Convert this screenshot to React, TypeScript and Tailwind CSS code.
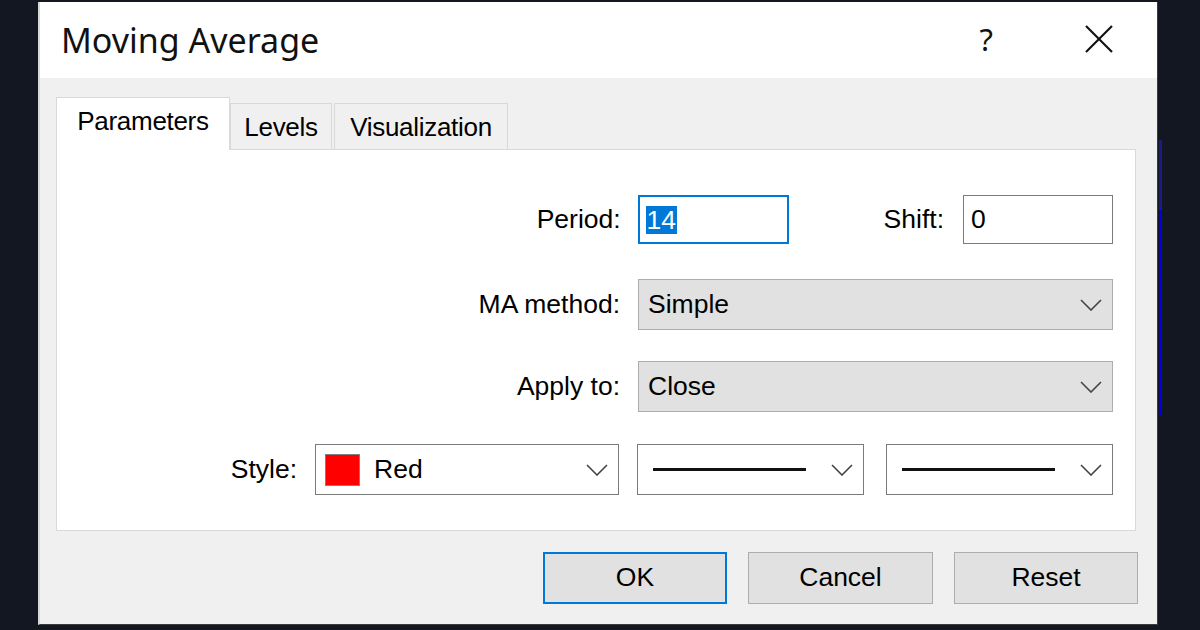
import React from "react";

function Chevron() {
  return (
    <svg width="22" height="12" viewBox="0 0 22 12" className="shrink-0">
      <polyline points="1,1 11,11 21,1" fill="none" stroke="#444" strokeWidth="1.6" />
    </svg>
  );
}

function Select({ width, gray, children }: { width: string; gray?: boolean; children: React.ReactNode }) {
  return (
    <div
      className={`${width} h-full flex items-center justify-between pl-[9px] pr-[10px] border ${
        gray ? "bg-[#e1e1e1] border-[#adadad]" : "bg-white border-[#7a7a7a]"
      }`}
    >
      <div className="flex items-center min-w-0">{children}</div>
      <Chevron />
    </div>
  );
}

export default function App() {
  const tabs = ["Parameters", "Levels", "Visualization"];

  return (
    <div className="w-[1200px] h-[630px] bg-[#131722] pt-[2px] pl-[38px] overflow-hidden font-['Liberation_Sans',Arial,sans-serif] text-black relative">
      {/* chart line peeking out behind the dialog */}
      <div className="absolute left-[1159px] top-[140px] w-[3px] h-[70px] bg-[#1a1a8a]" />
      <div className="absolute left-[1159px] top-[210px] w-[3px] h-[205px] bg-[#0000e0]" />

      <div className="w-[1120px] h-[623px] flex flex-col border-l-2 border-l-[#d8d8d8] border-r border-r-[#3a3a3a] border-b border-b-[#3a3a3a] bg-[#f0f0f0]">
        {/* title bar */}
        <div className="h-[76px] bg-white flex items-center pl-[21px] pr-[44px] shrink-0">
          <div className="font-['Noto_Sans',sans-serif] text-[34px] leading-none text-[#111] flex-1 -mt-[1px]">Moving Average</div>
          <div className="font-['Noto_Sans',sans-serif] text-[31px] leading-none text-[#111] mr-[92px] -mt-[2px]">?</div>
          <svg width="28" height="28" viewBox="0 0 28 28" className="-mt-[2px]">
            <line x1="1" y1="1" x2="27" y2="27" stroke="#111" strokeWidth="2.2" />
            <line x1="27" y1="1" x2="1" y2="27" stroke="#111" strokeWidth="2.2" />
          </svg>
        </div>

        {/* body */}
        <div className="flex-1 flex flex-col pl-[16px] pr-[21px] pt-[19px]">
          {/* tabs */}
          <div className="flex items-end h-[52px] relative z-10">
            {tabs.map((t, i) =>
              i === 0 ? (
                <div
                  key={t}
                  className="h-[53px] w-[174px] -mb-[1px] bg-white border border-b-0 border-[#d9d9d9] flex items-center justify-center pb-[6px] text-[26px] tracking-[-0.3px]"
                >
                  {t}
                </div>
              ) : (
                <div
                  key={t}
                  className={`h-[46px] ${i === 1 ? "w-[102px]" : "w-[174px] ml-[2px]"} bg-[#f0f0f0] border border-b-0 border-[#d9d9d9] flex items-center justify-center pt-[2px] text-[26px] tracking-[-0.3px]`}
                >
                  {t}
                </div>
              )
            )}
          </div>

          {/* tab panel */}
          <div className="w-[1080px] h-[382px] bg-white border border-[#d9d9d9] pt-[45px] pr-[22px] flex flex-col text-[26.5px]">
            <div className="h-[49px] flex items-center justify-end">
              <span className="mr-[17px]">Period:</span>
              <div className="w-[151px] h-full border-2 border-[#0078d7] flex items-center pl-[6px]">
                <span className="bg-[#0078d7] text-white leading-[28px] px-[1px]">14</span>
              </div>
              <span className="ml-[95px] mr-[19px]">Shift:</span>
              <div className="w-[150px] h-full border border-[#7a7a7a] bg-white flex items-center pl-[7px]">0</div>
            </div>

            <div className="h-[51px] mt-[35px] flex items-center justify-end">
              <span className="mr-[18px]">MA method:</span>
              <Select width="w-[475px]" gray>
                Simple
              </Select>
            </div>

            <div className="h-[51px] mt-[31px] flex items-center justify-end">
              <span className="mr-[18px]">Apply to:</span>
              <Select width="w-[475px]" gray>
                Close
              </Select>
            </div>

            <div className="h-[51px] mt-[32px] flex items-center justify-end">
              <span className="mr-[18px]">Style:</span>
              <Select width="w-[304px]">
                <div className="w-[35px] h-[32px] bg-[#ff0000] border border-[#808080] mr-[14px]" />
                Red
              </Select>
              <div className="ml-[18px] h-full">
                <Select width="w-[227px]">
                  <div className="w-[153px] h-[3px] bg-[#111] ml-[6px]" />
                </Select>
              </div>
              <div className="ml-[22px] h-full">
                <Select width="w-[227px]">
                  <div className="w-[153px] h-[3px] bg-[#111] ml-[6px]" />
                </Select>
              </div>
            </div>
          </div>

          {/* buttons */}
          <div className="flex justify-end gap-[21px] mt-[21px] -mr-[2px] text-[26.5px]">
            <button className="w-[184px] h-[52px] bg-[#e1e1e1] border-2 border-[#0078d7]">OK</button>
            <button className="w-[185px] h-[52px] bg-[#e1e1e1] border border-[#adadad]">Cancel</button>
            <button className="w-[184px] h-[52px] bg-[#e1e1e1] border border-[#adadad]">Reset</button>
          </div>
        </div>
      </div>
    </div>
  );
}
